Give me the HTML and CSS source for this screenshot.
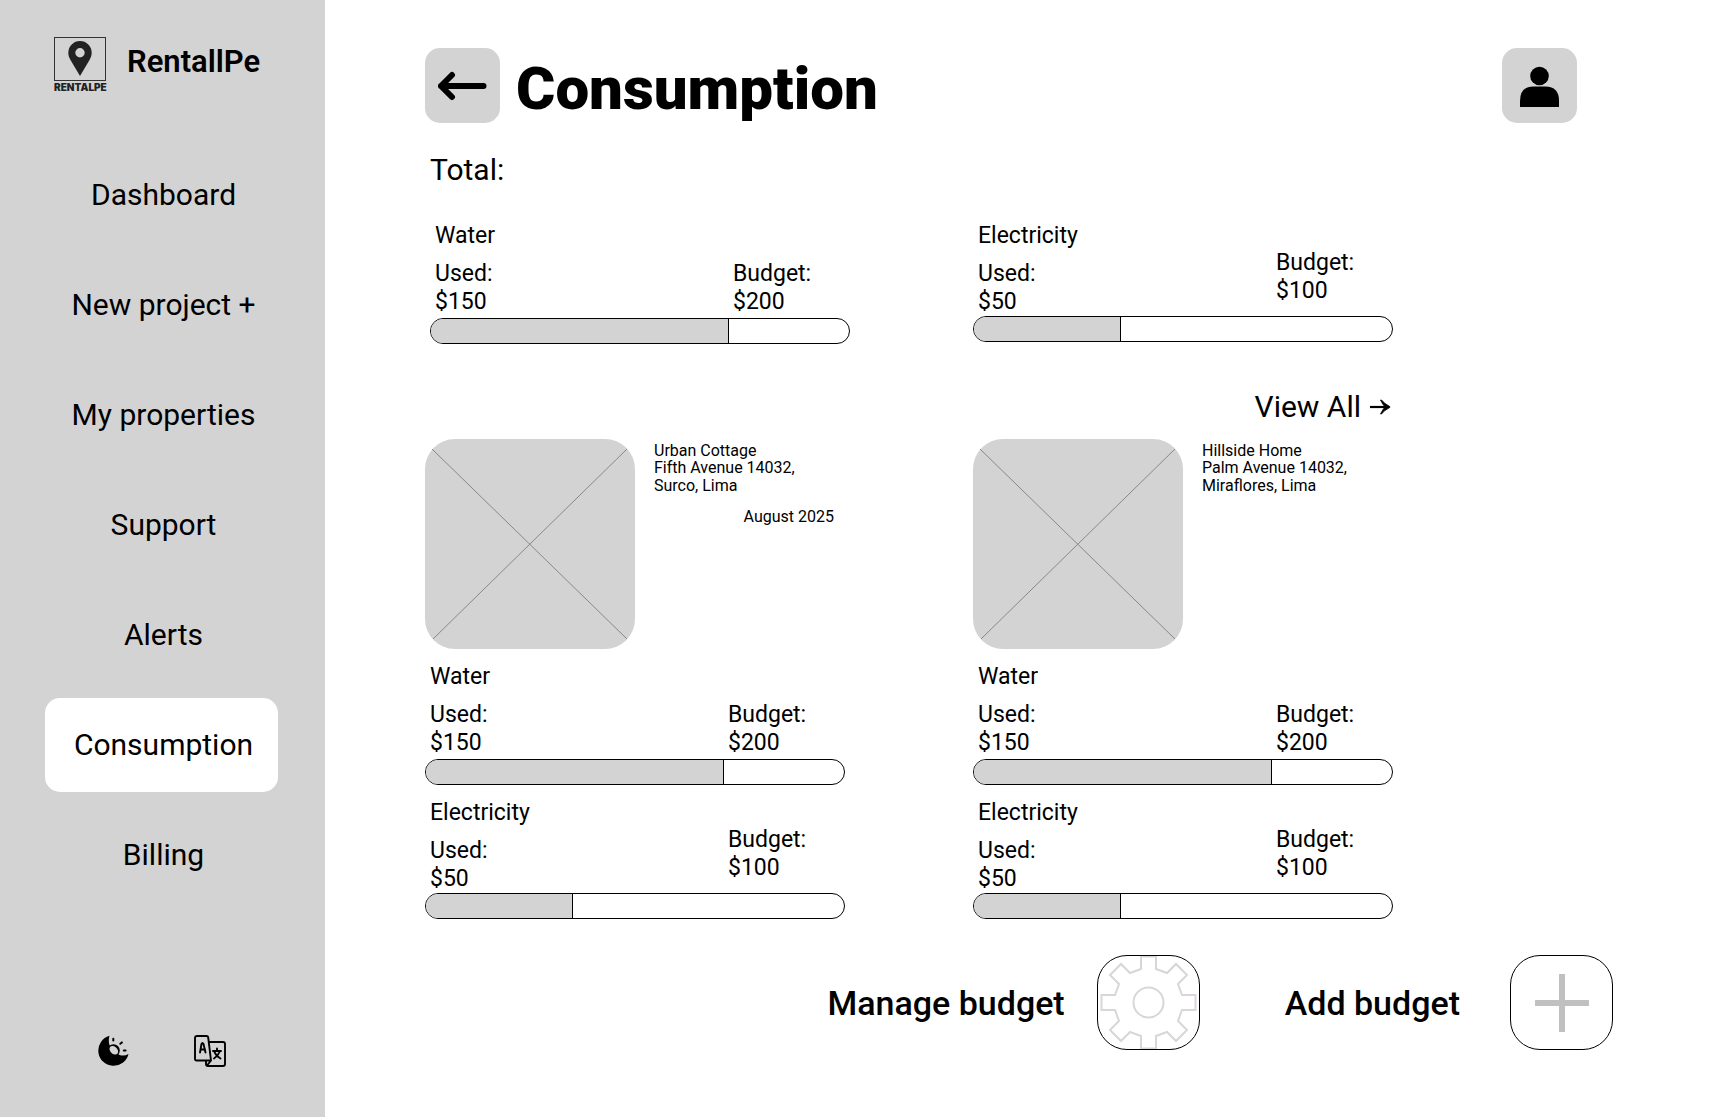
FILE: index.html
```html
<!DOCTYPE html>
<html lang="en">
<head>
<meta charset="utf-8">
<title>RentallPe - Consumption</title>
<link rel="stylesheet" href="styles.css">
</head>
<body>
<div class="app">
  <aside class="sidebar">
    <div class="brand">
      <div class="logo">
        <div class="logo-frame">
          <svg width="24" height="36" viewBox="0 0 24 36" aria-hidden="true"><path fill="#222" fill-rule="evenodd" d="M12 0a11.7 11.7 0 0 0-11.7 11.7c0 3 1 5 2.2 7.300L12 35l9.500-16c1.200-2.300 2.200-4.300 2.200-7.300A11.700 11.700 0 0 0 12 0zm0 7a4.700 4.700 0 1 1 0 9.400a4.700 4.700 0 0 1 0-9.400z"/></svg>
        </div>
        <span class="logo-text">RENTALPE</span>
      </div>
      <span class="brand-name">RentallPe</span>
    </div>
    <nav class="nav">
      <a href="#">Dashboard</a>
      <a href="#">New project +</a>
      <a href="#">My properties</a>
      <a href="#">Support</a>
      <a href="#">Alerts</a>
      <a href="#" class="active" aria-current="page">Consumption</a>
      <a href="#">Billing</a>
    </nav>
    <div class="tools">
      <button type="button" aria-label="Toggle theme">
        <svg width="32" height="32" viewBox="0 0 32 32" aria-hidden="true"><path d="M11.500.8A15.300 15.300 0 1 0 30.500 19C27 21 23 21 20 19L12 11C10.500 8 10.500 4 11.500.8z"/><circle cx="15.500" cy="15.500" r="6.300"/><ellipse cx="15.800" cy="15.200" rx="5" ry="3.500" transform="rotate(45 15.800 15.200)" fill="#d3d3d3"/><path d="M15.300 3.800v1.800M22.300 8.800l1.600-1.400M25.800 15.500h1.800" fill="none" stroke="#000" stroke-width="2" stroke-linecap="round"/></svg>
      </button>
      <button type="button" aria-label="Change language">
        <svg width="32" height="32" viewBox="0 0 32 32" fill="none" stroke="#000" stroke-width="1.900" stroke-linejoin="round" stroke-linecap="round" aria-hidden="true"><path d="M3 1h9.500q1.500 0 1.700 1.500L17 25.500H2.500Q1 25.500 1 24V3q0-2 2-2zM15 7h14q2 0 2 2v20q0 2-2 2H14q-2 0-2-2v-3M17 25.500L13 30.500"/><path d="M6 17.500L7.500 9q1-2 2 0L11.500 17.500M7 14.500h4M23 13.500v2M19 16h8M20.500 17q1.500 4 6 6.500M25.500 17q-1.500 4-5.500 6.500"/></svg>
      </button>
    </div>
  </aside>

  <main class="main">
    <header class="header">
      <button type="button" class="tile" aria-label="Back">
        <svg width="50" height="30" viewBox="1 0 50 30" fill="none" stroke="#000" stroke-width="6" stroke-linecap="round" stroke-linejoin="round" aria-hidden="true"><path d="M46.500 15H4M15 4L4 15l11 11"/></svg>
      </button>
      <h1>Consumption</h1>
      <button type="button" class="tile profile" aria-label="Profile">
        <svg width="40" height="42" viewBox="1 -2 40 42" aria-hidden="true"><circle cx="20.500" cy="9" r="9.300"/><path d="M1 40v-6Q1 19.500 14.500 19.500h12q13.500 0 13.500 14.500v6z"/></svg>
      </button>
    </header>

    <section class="content">
      <h2 class="total">Total:</h2>
      <div class="totals">
        <section class="meter">
          <h3>Water</h3>
          <p class="used">Used:<br>$150</p>
          <p class="budget">Budget:<br>$200</p>
          <div class="bar"><div class="fill" style="width:71.4%"></div></div>
        </section>
        <section class="meter raised">
          <h3>Electricity</h3>
          <p class="used">Used:<br>$50</p>
          <p class="budget">Budget:<br>$100</p>
          <div class="bar"><div class="fill" style="width:35.1%"></div></div>
        </section>
      </div>

      <a href="#" class="view-all">View All
        <svg width="22" height="16" viewBox="0 0 22 16" aria-hidden="true"><path d="M1 8h17" stroke="#000" stroke-width="2.200"/><path d="M11.500 1Q14 6 16 8Q14 10 11.500 15L12.500 15Q15 11.500 21 8.300V7.700Q15 4.500 12.500 1z" stroke="#000" stroke-width=".8"/></svg>
      </a>

      <div class="properties">
        <article class="property">
          <div class="summary">
            <svg class="photo" viewBox="0 0 210 210" role="img" aria-label="Urban Cottage photo"><rect width="210" height="210" rx="30" fill="#d3d3d3"/><path d="M7 10L202 200M202 10L8 200" stroke="#888"/></svg>
            <div class="details">
              <h3>Urban Cottage</h3>
              <p>Fifth Avenue 14032,<br>Surco, Lima</p>
              <time datetime="2025-08">August 2025</time>
            </div>
          </div>
          <section class="meter">
            <h3>Water</h3>
            <p class="used">Used:<br>$150</p>
            <p class="budget">Budget:<br>$200</p>
            <div class="bar"><div class="fill" style="width:71.4%"></div></div>
          </section>
          <section class="meter raised">
            <h3>Electricity</h3>
            <p class="used">Used:<br>$50</p>
            <p class="budget">Budget:<br>$100</p>
            <div class="bar"><div class="fill" style="width:35.1%"></div></div>
          </section>
        </article>
        <article class="property">
          <div class="summary">
            <svg class="photo" viewBox="0 0 210 210" role="img" aria-label="Hillside Home photo"><rect width="210" height="210" rx="30" fill="#d3d3d3"/><path d="M7 10L202 200M202 10L8 200" stroke="#888"/></svg>
            <div class="details">
              <h3>Hillside Home</h3>
              <p>Palm Avenue 14032,<br>Miraflores, Lima</p>
            </div>
          </div>
          <section class="meter">
            <h3>Water</h3>
            <p class="used">Used:<br>$150</p>
            <p class="budget">Budget:<br>$200</p>
            <div class="bar"><div class="fill" style="width:71.4%"></div></div>
          </section>
          <section class="meter raised">
            <h3>Electricity</h3>
            <p class="used">Used:<br>$50</p>
            <p class="budget">Budget:<br>$100</p>
            <div class="bar"><div class="fill" style="width:35.1%"></div></div>
          </section>
        </article>
      </div>
    </section>

    <footer class="actions">
      <button type="button" class="action manage">
        <span>Manage budget</span>
        <span class="action-icon">
          <svg width="101" height="93" viewBox="-50.500 -46.500 101 93" fill="none" stroke="#d9d5da" stroke-width="2" aria-hidden="true"><path d="M-7.500-46H7.500V-33.500L18.500-29.500L27.500-38.500L38.500-27.500L29.500-18.500L33.500-7.500H47V7.500H33.500L29.500 18.500L38.500 27.500L27.500 38.500L18.500 29.500L7.500 33.500V46H-7.500V33.500L-18.500 29.500L-27.500 38.500L-38.500 27.500L-29.500 18.500L-33.500 7.500H-47V-7.500H-33.500L-29.500-18.500L-38.500-27.500L-27.500-38.500L-18.500-29.500L-7.500-33.500z"/><circle r="15"/></svg>
        </span>
      </button>
      <button type="button" class="action add">
        <span>Add budget</span>
        <span class="action-icon">
          <svg width="54" height="58" viewBox="0 0 54 58" fill="#c0c0c0" aria-hidden="true"><path d="M24 0h6v58h-6zM0 26h54v6H0z"/></svg>
        </span>
      </button>
    </footer>
  </main>
</div>
</body>
</html>
```

FILE: styles.css
```css
* {
  box-sizing: border-box;
}

body,
h1,
h2,
h3,
p {
  margin: 0;
}

body {
  font-family: Roboto, "Liberation Sans", sans-serif;
  font-size: 23px;
  line-height: 28px;
  color: #000;
  background: #fff;
}

h2,
h3 {
  font-size: inherit;
  font-weight: 400;
}

button {
  padding: 0;
  border: 0;
  background: none;
  font: inherit;
  color: inherit;
  cursor: pointer;
}

a {
  color: inherit;
  text-decoration: none;
}

svg {
  display: block;
  flex: none;
}

.app {
  display: flex;
  min-height: 100vh;
}

/* Sidebar */
.sidebar {
  flex: 0 0 325px;
  display: flex;
  flex-direction: column;
  padding: 37px 47px 50px 45px;
  background: #d3d3d3;
}

.brand {
  display: flex;
  gap: 21px;
  padding-left: 9px;
  height: 56px;
}

.logo {
  width: 52px;
}

.logo-frame {
  display: flex;
  justify-content: center;
  align-items: center;
  height: 44px;
  border: 1px solid #333;
}

.logo-text {
  display: block;
  font: 900 10px/12px Inter, sans-serif;
  color: #222;
}

.brand-name {
  padding-top: 6px;
  font-size: 31px;
  font-weight: 600;
  line-height: 38px;
}

.nav {
  display: flex;
  flex-direction: column;
  gap: 16px;
  margin-top: 55px;
}

.nav a {
  padding: 28px 0 28px 4px;
  border-radius: 15px;
  font-size: 30px;
  font-weight: 400;
  line-height: 38px;
  text-align: center;
}

.nav .active {
  background: #fff;
}

.tools {
  display: flex;
  justify-content: center;
  gap: 64px;
  margin-top: auto;
}

/* Main area */
.main {
  flex: 1;
  min-width: 0;
  padding: 48px 115px 48px 100px;
}

.header {
  display: flex;
  align-items: center;
  gap: 16px;
  margin-right: 36px;
}

.tile {
  display: flex;
  justify-content: center;
  align-items: center;
  width: 75px;
  height: 75px;
  border-radius: 15px;
  background: #d3d3d3;
}

.profile {
  margin-left: auto;
}

h1 {
  padding-top: 7px;
  font-size: 60px;
  font-weight: 900;
  line-height: 68px;
}

.content {
  margin-right: 220px;
}

.total {
  margin: 28px 0 33px 5px;
  font-size: 30px;
  font-weight: 400;
  line-height: 38px;
}

.totals,
.properties {
  display: grid;
  grid-template-columns: 1fr 1fr;
  align-items: start;
}

.totals {
  column-gap: 123px;
  padding-left: 5px;
}

.properties {
  column-gap: 128px;
}

.view-all {
  display: flex;
  justify-content: flex-end;
  align-items: center;
  gap: 8px;
  margin: 44px 2px 13px 0;
  font-size: 30px;
  font-weight: 400;
  line-height: 38px;
}

/* Usage meter: name, used and budget amounts, and a bar */
.meter {
  display: grid;
  grid-template-columns: 5fr 2fr;
}

.meter h3 {
  grid-area: 1 / 1;
  padding-left: 5px;
}

.used {
  grid-area: 2 / 1;
  padding: 10px 0 2px 5px;
}

.budget {
  grid-area: 1 / 2 / 3 / 3;
  align-self: end;
  padding: 0 0 2px 3px;
}

.raised .used {
  padding-bottom: 0;
}

.raised .budget {
  padding-bottom: 11px;
}

.bar {
  grid-area: 3 / 1 / 4 / 3;
  height: 26px;
  border: 1px solid #000;
  border-radius: 13px;
  overflow: hidden;
}

.fill {
  height: 100%;
  border-right: 1px solid #000;
  background: #d3d3d3;
}

/* Property cards */
.property {
  display: grid;
  gap: 14px;
}

.summary {
  display: flex;
  gap: 19px;
}

.photo {
  width: 210px;
  height: 210px;
}

.details {
  flex: 1;
  display: flex;
  flex-direction: column;
  padding: 3px 11px 0 0;
  font-size: 16px;
  line-height: 18px;
}

.details h3 {
  line-height: 17px;
}

.details time {
  margin-top: 13px;
  text-align: right;
}

/* Bottom actions */
.actions {
  display: flex;
  justify-content: flex-end;
  gap: 85px;
  margin-top: 36px;
}

.action {
  display: flex;
  align-items: center;
  font-size: 34px;
  font-weight: 500;
  line-height: 42px;
}

.manage {
  gap: 32px;
}

.add {
  gap: 50px;
}

.action-icon {
  display: flex;
  justify-content: center;
  align-items: center;
  width: 103px;
  height: 95px;
  border: 1px solid #000;
  border-radius: 30px;
  overflow: hidden;
}
```
